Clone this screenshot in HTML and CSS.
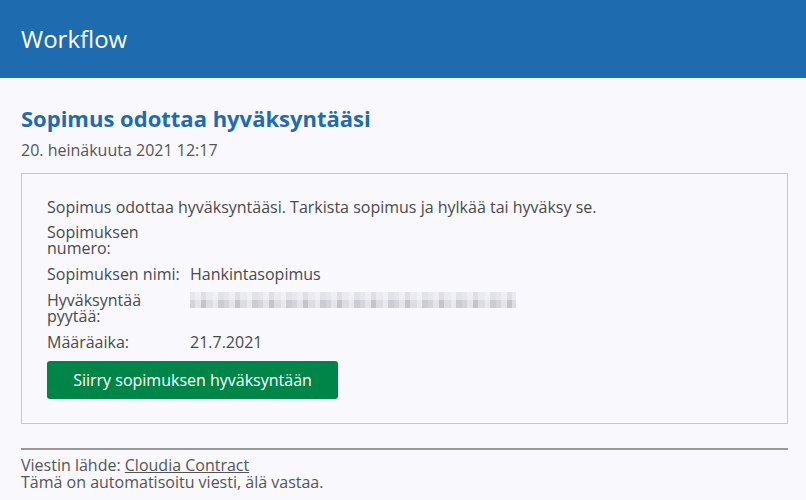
FILE: index.html
```html
<!DOCTYPE html>
<html>
<head>
  <title>Workflow</title>
  <link rel="stylesheet" href="styles.css">
</head>
<body>
  <div class="header">Workflow</div>
  <div class="content">
    <h1>Sopimus odottaa hyväksyntääsi</h1>
    <div class="date">20. heinäkuuta 2021 12:17</div>
    <div class="message-box">
      <p>Sopimus odottaa hyväksyntääsi. Tarkista sopimus ja hylkää tai hyväksy se.</p>
      <table class="details">
        <tr>
          <td class="label">Sopimuksen numero:</td>
          <td></td>
        </tr>
        <tr>
          <td class="label">Sopimuksen nimi:</td>
          <td>Hankintasopimus</td>
        </tr>
        <tr>
          <td class="label">Hyväksyntää pyytää:</td>
          <td><span class="redacted" aria-hidden="true"></span></td>
        </tr>
        <tr>
          <td class="label">Määräaika:</td>
          <td>21.7.2021</td>
        </tr>
      </table>
      <a class="button" href="#">Siirry sopimuksen hyväksyntään</a>
    </div>
    <div class="footer">
      Viestin lähde: <a href="#">Cloudia Contract</a><br>
      Tämä on automatisoitu viesti, älä vastaa.
    </div>
  </div>
</body>
</html>
```

FILE: styles.css
```css
body {
  margin: 0;
  font-family: "Open Sans", sans-serif;
  background-color: #f8f8fd;
  color: #4a4a4a;
}

.header {
  background-color: #1e6bb0;
  color: #fff;
  font-size: 24px;
  height: 78px;
  line-height: 78px;
  padding-left: 21px;
}

.content {
  padding: 0 18px 0 21px;
}

h1 {
  margin: 25px 0 6px;
  font-size: 22px;
  line-height: 30px;
  font-weight: bold;
  color: #1e6bb0;
}

.date {
  font-size: 16px;
  line-height: 22px;
  color: #555;
}

.message-box {
  margin-top: 12px;
  border: 1px solid #c6c6cc;
  padding: 22px 25px 24px;
  font-size: 16px;
}

.message-box p {
  margin: 0 0 1px;
  line-height: 22px;
}

.details {
  border-collapse: collapse;
  margin-bottom: 6px;
}

.details td {
  padding: 5px 0;
  line-height: 16px;
  vertical-align: top;
}

.details .label {
  width: 134px;
  padding-right: 9px;
}

.redacted {
  display: block;
  width: 326px;
  height: 16px;
  background:
    linear-gradient(180deg, rgba(248,248,253,0.5) 0 8px, rgba(248,248,253,0) 8px),
    repeating-linear-gradient(90deg, #d4d4dc 0 5px, #e4e4ea 5px 11px, #c4c4cc 11px 16px, #dcdce3 16px 23px, #e8e8ee 23px 28px, #cbcbd3 28px 34px);
}

.button {
  display: block;
  width: 291px;
  height: 38px;
  line-height: 38px;
  text-align: center;
  background-color: #008549;
  color: #fff;
  font-size: 16px;
  font-weight: 500;
  text-decoration: none;
  border-radius: 3px;
}

.footer {
  margin-top: 24px;
  border-top: 2px solid #999;
  padding-top: 7px;
  font-size: 16px;
  line-height: 17px;
  color: #555;
}

.footer a {
  color: #555;
}
```
